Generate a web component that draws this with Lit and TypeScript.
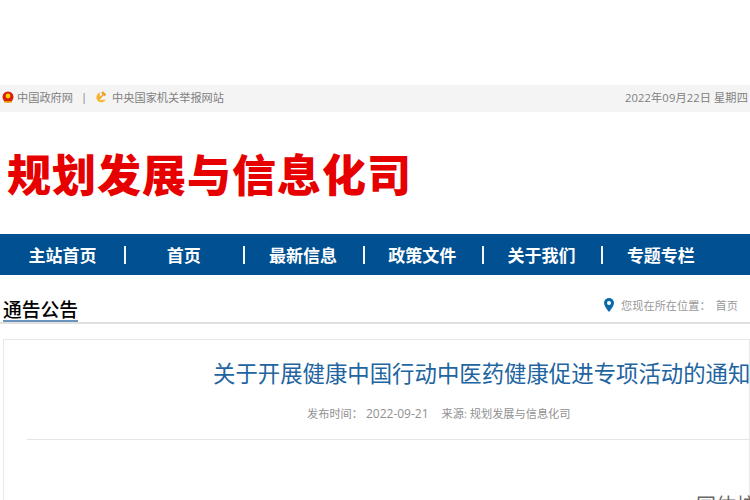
import { LitElement, html, css } from "lit";
import { customElement } from "lit/decorators.js";

const NAV = ["主站首页", "首页", "最新信息", "政策文件", "关于我们", "专题专栏"];

@customElement("app-root")
export class AppRoot extends LitElement {
  static styles = css`
    :host { display: block; width: 750px; height: 500px; overflow: hidden; background: #fff;
      font-family: "Open Sans", "Noto Sans CJK SC", sans-serif; }
    .top { margin-top: 85px; height: 27px; background: #f4f4f4; display: flex; align-items: center;
      justify-content: space-between; padding: 0 2px 4px; box-sizing: border-box; font-size: 11.2px; color: #808080; }
    .left { display: flex; align-items: center; }
    .sep { margin: 0 8px; }
    .ic { margin-right: 3px; }
    .ic.hammer { margin-right: 5px; }
    .date { letter-spacing: 0.12px; }
    .title { height: 122px; display: flex; align-items: center; padding-left: 7px; font-size: 44px; font-weight: 900; color: #e60000;
      font-family: "Noto Sans CJK SC", sans-serif; letter-spacing: 1px; white-space: nowrap; }
    .nav { height: 41px; background: #005092; display: flex; padding-left: 4.75px; color: #fff; font-size: 17px; font-weight: 700;
      font-family: "Noto Sans CJK SC", sans-serif; }
    .nav div { width: 119.3px; flex: none; box-sizing: border-box; display: flex; align-items: center; justify-content: center; position: relative; }
    .nav div:first-child { padding-right: 4px; }
    .nav div:not(:last-child)::after { content: ""; position: absolute; right: -2px; top: 12px; width: 2px; height: 18px; background: #f2f6fa; }
    .crumb { display: flex; justify-content: space-between; align-items: flex-end; height: 47px; border-bottom: 2px solid #e0e0e0; padding: 0 12px 0 3px; }
    .crumb b { font-size: 18.75px; color: #000; border-bottom: 2px solid #6a94bd; line-height: 23px; margin-bottom: -1px; font-family: "Noto Sans CJK SC", sans-serif; font-weight: 500; position: relative; top: -1px; }
    .loc { font-size: 11.2px; color: #999; display: flex; align-items: center; height: 34px; }
    .loc svg { margin-right: 7px; }
    .loc span + span { margin-left: 5px; }
    .card { margin: 15px 0 0 3px; border: 1px solid #e8e8e8; padding: 0 0 0 23px; height: 200px; white-space: nowrap; }
    h1 { margin: 16px 0 0; font-weight: 400; font-size: 22.4px; color: #21649f; padding-left: 186px; line-height: 36px; }
    .meta { font-size: 11.2px; color: #909090; padding-left: 280px; margin-top: 13px; }
    .meta .d { margin-left: 3px; font-size: 12px; }
    .meta .s { margin-left: 13px; }
    hr { border: 0; border-top: 1px solid #e5e5e5; margin: 17px 0 0; }
    .body { font-size: 20px; color: #666; padding-left: 669px; margin-top: 54px; line-height: 24px; }
  `;
  render() {
    return html`
      <div class="top">
        <div class="left">
          <svg class="ic" width="12" height="12" viewBox="0 0 12 12"><circle cx="6" cy="6" r="5.5" fill="#d81e06"/><circle cx="6" cy="5" r="2.4" fill="#fc0"/><path d="M2 10h8v1.5H2z" fill="#e8a000"/></svg>
          <span>中国政府网</span><span class="sep">|</span>
          <svg class="ic hammer" width="12" height="12" viewBox="0 0 12 12"><path d="M4.8 1.5A5 5 0 1 0 11 8.2c-1.2.8-2.6 1-3.8.4l-1.3 1-1-1 1-1.1C5 5.500 4.700 3.200 4.800 1.500z" fill="#f7b52c"/><path d="M6 1.200 8.200 .5l3 3-1.400 1.800-1.100-1L5.400 7.700 4.500 6.800l3-3.500z" fill="#f09a2a"/></svg>
          <span>中央国家机关举报网站</span>
        </div>
        <span class="date">2022年09月22日 星期四</span>
      </div>
      <div class="title">规划发展与信息化司</div>
      <div class="nav">${NAV.map(n => html`<div>${n}</div>`)}</div>
      <div class="crumb"><b>通告公告</b><div class="loc">
        <svg width="10" height="14" viewBox="0 0 10 14"><path d="M5 0a5 5 0 0 1 5 5c0 3-5 9-5 9S0 8 0 5a5 5 0 0 1 5-5z" fill="#0a6aa8"/><circle cx="5" cy="5" r="2" fill="#fff"/></svg>
        <span>您现在所在位置：</span><span>首页</span></div></div>
      <div class="card">
        <h1>关于开展健康中国行动中医药健康促进专项活动的通知</h1>
        <div class="meta">发布时间：<span class="d">2022-09-21</span><span class="s">来源: 规划发展与信息化司</span></div>
        <hr />
        <div class="body">国体校</div>
      </div>`;
  }
}
